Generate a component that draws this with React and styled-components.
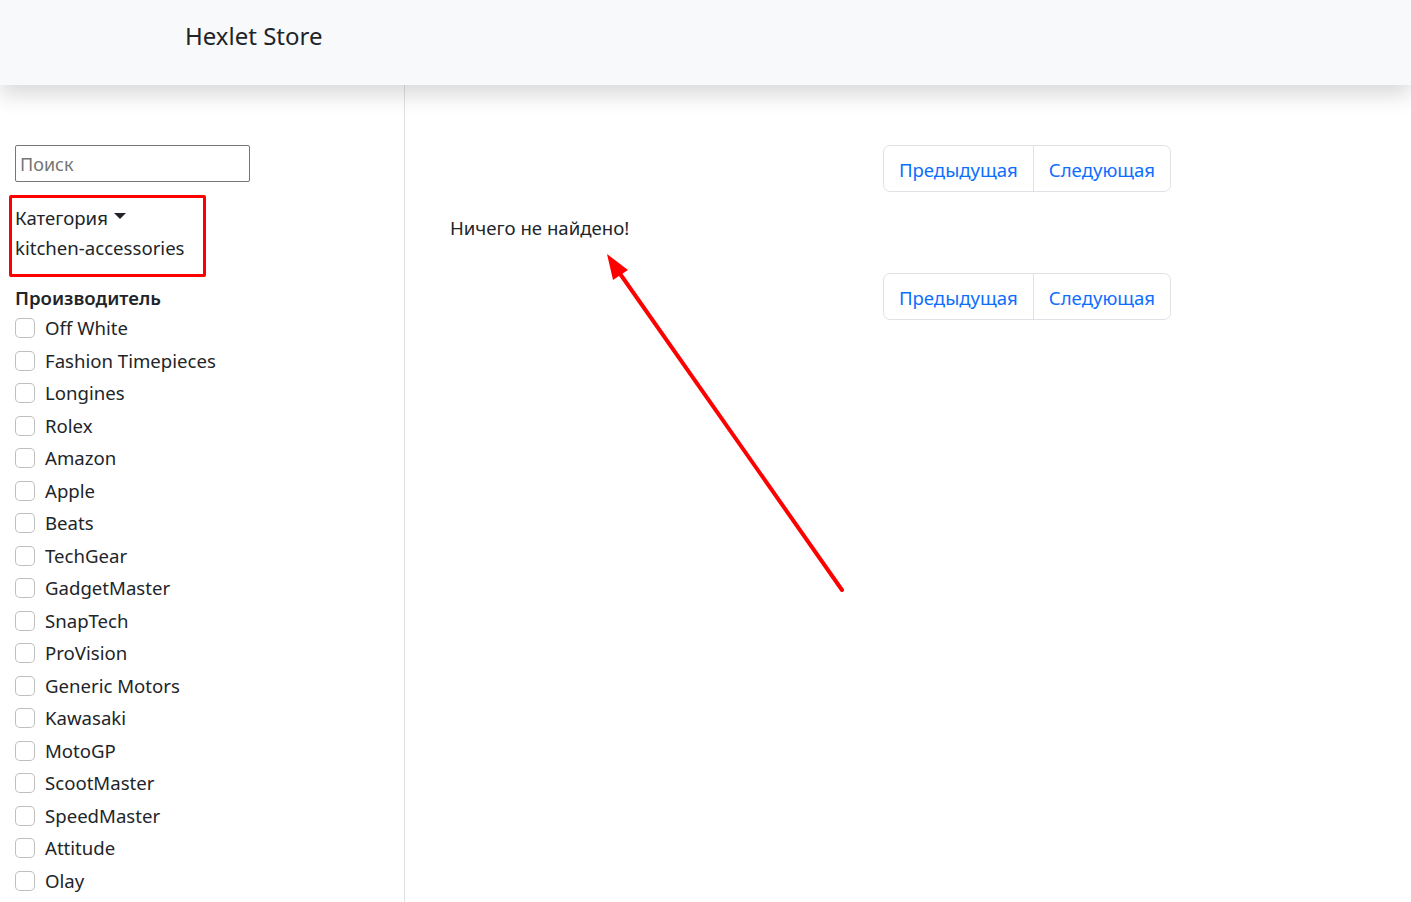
import React from "react";
import styled, { createGlobalStyle } from "styled-components";

const GlobalStyle = createGlobalStyle`
  html, body {
    margin: 0;
    padding: 0;
    background: #fff;
  }
  body {
    font-family: "Noto Sans", "Open Sans", sans-serif;
    font-size: 18.6px;
    line-height: 30px;
    color: #212529;
  }
  * {
    box-sizing: border-box;
  }
`;

const brands = [
  "Off White",
  "Fashion Timepieces",
  "Longines",
  "Rolex",
  "Amazon",
  "Apple",
  "Beats",
  "TechGear",
  "GadgetMaster",
  "SnapTech",
  "ProVision",
  "Generic Motors",
  "Kawasaki",
  "MotoGP",
  "ScootMaster",
  "SpeedMaster",
  "Attitude",
  "Olay",
];

const App = () => {
  return (
    <Page>
      <GlobalStyle />
      <Navbar>
        <Brand>Hexlet Store</Brand>
      </Navbar>
      <Layout>
        <Sidebar>
          <SearchInput placeholder="Поиск" />
          <Highlight>
            <CategoryToggle>
              Категория
              <Caret />
            </CategoryToggle>
            <CategoryValue>kitchen-accessories</CategoryValue>
          </Highlight>
          <FilterTitle>Производитель</FilterTitle>
          <CheckList>
            {brands.map((name) => (
              <CheckRow key={name}>
                <CheckBox type="checkbox" />
                <span>{name}</span>
              </CheckRow>
            ))}
          </CheckList>
        </Sidebar>
        <Main>
          <Content>
            <Pagination>
              <PageLink>Предыдущая</PageLink>
              <PageLink>Следующая</PageLink>
            </Pagination>
            <Empty>Ничего не найдено!</Empty>
            <Pagination>
              <PageLink>Предыдущая</PageLink>
              <PageLink>Следующая</PageLink>
            </Pagination>
          </Content>
        </Main>
      </Layout>
      <Arrow viewBox="0 0 260 360" width="260" height="360">
        <line x1="238" y1="338" x2="12" y2="16" stroke="#ff0000" strokeWidth="4" strokeLinecap="round" />
        <polygon points="3,2 24,18 9,28" fill="#ff0000" />
      </Arrow>
    </Page>
  );
};

const Page = styled.div`
  position: relative;
  min-height: 902px;
  overflow: hidden;
`;

const Navbar = styled.header`
  position: relative;
  z-index: 2;
  height: 85px;
  padding: 17px 0 0 185px;
  background-color: #f8f9fa;
  box-shadow: 0 10px 20px rgba(0, 0, 0, 0.15);
`;

const Brand = styled.a`
  font-size: 24px;
  line-height: 37.5px;
  color: #212529;
  cursor: pointer;
`;

const Layout = styled.div`
  display: flex;
  min-height: 817px;
`;

const Sidebar = styled.aside`
  width: 405px;
  flex-shrink: 0;
  padding: 60px 15px 0 15px;
  border-right: 1px solid #dee2e6;
`;

const SearchInput = styled.input`
  display: block;
  width: 235px;
  height: 37px;
  padding: 2px 4px;
  font-family: inherit;
  font-size: 18px;
  color: #212529;
  border: 1px solid #767676;
  border-radius: 2px;
  outline: none;

  &::placeholder {
    color: #757575;
  }
`;

const Highlight = styled.div`
  width: 197px;
  margin: 13px 0 0 -6px;
  padding: 5px 3px 11px 3px;
  border: 3px solid #ff0000;
  border-radius: 2px;
`;

const CategoryToggle = styled.div`
  display: flex;
  align-items: center;
  gap: 6px;
  cursor: pointer;
`;

const Caret = styled.span`
  width: 0;
  height: 0;
  margin-top: -4px;
  border-top: 6px solid #212529;
  border-left: 6px solid transparent;
  border-right: 6px solid transparent;
`;

const CategoryValue = styled.div``;

const FilterTitle = styled.div`
  margin-top: 6px;
  font-weight: 600;
`;

const CheckList = styled.div`
  display: flex;
  flex-direction: column;
`;

const CheckRow = styled.label`
  display: flex;
  align-items: flex-start;
  gap: 10px;
  min-height: 30px;
  margin-bottom: 2.5px;
`;

const CheckBox = styled.input`
  appearance: none;
  width: 20px;
  height: 20px;
  margin: 5px 0 0 0;
  flex-shrink: 0;
  border: 1px solid rgba(0, 0, 0, 0.25);
  border-radius: 5px;
  background: #fff;
`;

const Main = styled.main`
  flex: 1;
  padding: 60px 0 0 45px;
`;

const Content = styled.div`
  width: 721px;
  display: flex;
  flex-direction: column;
`;

const Pagination = styled.div`
  align-self: flex-end;
  display: flex;
  border: 1px solid #dee2e6;
  border-radius: 7px;
  overflow: hidden;
`;

const PageLink = styled.a`
  padding: 9px 15px 6px 15px;
  color: #0d6efd;
  cursor: pointer;

  & + & {
    border-left: 1px solid #dee2e6;
  }
`;

const Empty = styled.p`
  margin: 21px 0 30px 0;
`;

const Arrow = styled.svg`
  position: absolute;
  left: 604px;
  top: 252px;
  overflow: visible;
`;

export default App;
